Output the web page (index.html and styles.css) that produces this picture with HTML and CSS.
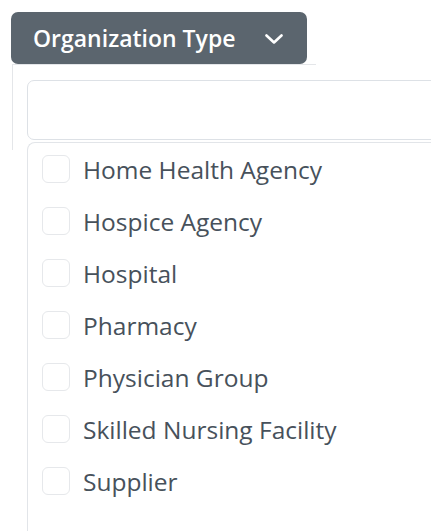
FILE: index.html
```html
<!DOCTYPE html>
<html lang="en">
  <head>
    <meta charset="UTF-8" />
    <meta name="viewport" content="width=device-width, initial-scale=1.0" />
    <title>Organization Type Filter</title>
    <link rel="stylesheet" href="styles.css">
  </head>
  <body>
    <div class="filter">
      <button class="filter-toggle">
        <span>Organization Type</span>
        <svg class="chevron" width="18" height="10" viewBox="0 0 18 10">
          <polyline points="1.5,1.5 9,8.5 16.5,1.5" fill="none" stroke="#fff" stroke-width="2.6" stroke-linecap="round" stroke-linejoin="round" />
        </svg>
      </button>
      <div class="filter-panel">
        <div class="filter-search"></div>
      </div>
      <ul class="filter-options">
        <li><span class="check"></span>Home Health Agency</li>
        <li><span class="check"></span>Hospice Agency</li>
        <li><span class="check"></span>Hospital</li>
        <li><span class="check"></span>Pharmacy</li>
        <li><span class="check"></span>Physician Group</li>
        <li><span class="check"></span>Skilled Nursing Facility</li>
        <li><span class="check"></span>Supplier</li>
      </ul>
    </div>
  </body>
</html>
```

FILE: styles.css
```css
body {
  font-family: "Open Sans", Arial, sans-serif;
  margin: 0;
  padding: 0;
  background-color: #fff;
}

.filter {
  width: 431px;
  height: 531px;
  padding: 12px 0 0 11px;
  box-sizing: border-box;
  overflow: hidden;
}

.filter-toggle {
  display: flex;
  align-items: center;
  justify-content: space-between;
  width: 296px;
  height: 52px;
  padding: 0 24px 0 22px;
  background-color: #5b656e;
  color: #fff;
  border: none;
  border-radius: 7px;
  font-family: "Open Sans", Arial, sans-serif;
  font-size: 23px;
  font-weight: 600;
  cursor: pointer;
}

.chevron {
  margin-top: 2px;
}

.filter-panel {
  margin-left: 1px;
  width: 304px;
  padding: 15px 0 10px 14px;
  box-sizing: border-box;
  border-top: 1px solid #e4e6e9;
  border-left: 1px solid #e4e6e9;
}

.filter-search {
  width: 420px;
  height: 60px;
  box-sizing: border-box;
  border: 1px solid #dde1e6;
  border-radius: 7px;
}

.filter-options {
  list-style: none;
  margin: -8px 0 0 16px;
  padding: 0;
  width: 420px;
  height: 400px;
  border-top: 1px solid #e2e5e9;
  border-left: 1px solid #e2e5e9;
  border-top-left-radius: 8px;
  background-color: #fff;
}

.filter-options li {
  display: flex;
  align-items: center;
  height: 52px;
  padding-left: 14px;
  font-size: 24.5px;
  color: #47515b;
}

.check {
  width: 28px;
  height: 28px;
  box-sizing: border-box;
  border: 1px solid #e6e8eb;
  border-radius: 6px;
  margin-right: 13px;
  flex-shrink: 0;
}
```
